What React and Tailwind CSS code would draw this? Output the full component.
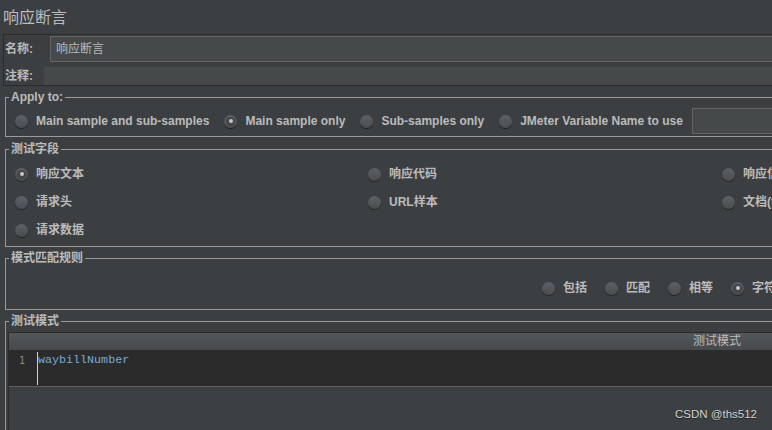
import React from "react";

function Radio({ checked }) {
  return (
    <span className="flex h-[13px] w-[13px] shrink-0 items-center justify-center rounded-full bg-linear-to-b from-[#5e6163] to-[#4a4d4f] shadow-[0_1px_1px_rgba(0,0,0,0.5)]">
      {checked && (
        <span className="flex h-[9px] w-[9px] items-center justify-center rounded-full bg-[#444749]">
          <span className="h-[4px] w-[4px] rounded-full bg-[#c6c6c6]" />
        </span>
      )}
    </span>
  );
}

function Option({ checked, children }) {
  return (
    <div className="flex items-center gap-[8px]">
      <Radio checked={checked} />
      <span className="whitespace-nowrap text-[12px] font-bold leading-[14px] text-[#bbbbbb]">{children}</span>
    </div>
  );
}

function Check({ children }) {
  return (
    <div className="flex items-center gap-[8px]">
      <span className="h-[13px] w-[13px] shrink-0 rounded-[2px] bg-linear-to-b from-[#5e6163] to-[#4a4d4f]" />
      <span className="whitespace-nowrap text-[12px] font-bold leading-[14px] text-[#bbbbbb]">{children}</span>
    </div>
  );
}

function Group({ title, className, children }) {
  return (
    <fieldset className={`ml-[5px] border border-[#9b9b9b] ${className}`}>
      <legend className="ml-[3px] px-[2px] text-[12px] font-bold leading-[15px] text-[#bbbbbb]">{title}</legend>
      {children}
    </fieldset>
  );
}

export default function App() {
  return (
    <div className="relative h-[430px] w-[772px] overflow-hidden bg-[#3c3f41] font-['Liberation_Sans','Noto_Sans_CJK_SC',sans-serif]">
      <div className="flex w-[1425px] flex-col">
        {/* title */}
        <div className="h-[34px] pl-[3px] pt-[10px] text-[16px] leading-[16px] text-[#bbbbbb]">响应断言</div>

        {/* name / comment panel */}
        <div className="ml-[3px] h-[52px] border border-[#2b2b2b] pt-[1px]">
          <div className="flex h-[26px] items-center">
            <span className="w-[46px] pl-[1px] text-[12px] font-bold text-[#bbbbbb]">名称:</span>
            <div className="flex h-[26px] flex-1 items-center border border-[#646464] bg-[#45494a] pl-[5px] text-[12px] text-[#bbbbbb]">
              响应断言
            </div>
          </div>
          <div className="mt-[5px] flex h-[18px] items-center">
            <span className="w-[40px] pl-[1px] text-[12px] font-bold text-[#bbbbbb]">注释:</span>
            <div className="h-[18px] flex-1 bg-[#45494a]" />
          </div>
        </div>

        {/* Apply to */}
        <Group title="Apply to:" className="mt-[4px]">
          <div className="flex h-[31px] items-center gap-[15px] pl-[9px] pt-[1px]">
            <Option>Main sample and sub-samples</Option>
            <Option checked>Main sample only</Option>
            <Option>Sub-samples only</Option>
            <Option>JMeter Variable Name to use</Option>
            <div className="ml-[-6px] h-[26px] w-[200px] border border-[#646464] bg-[#45494a]" />
          </div>
        </Group>

        {/* 测试字段 */}
        <Group title="测试字段" className="mt-[5px]">
          <div className="grid grid-cols-[353px_354px_354px_354px] pb-[2px] pl-[9px] pt-[3px]">
            <div className="flex h-[28px] items-center"><Option checked>响应文本</Option></div>
            <div className="flex h-[28px] items-center"><Option>响应代码</Option></div>
            <div className="flex h-[28px] items-center"><Option>响应信息</Option></div>
            <div className="flex h-[28px] items-center"><Option>响应头</Option></div>
            <div className="flex h-[28px] items-center"><Option>请求头</Option></div>
            <div className="flex h-[28px] items-center"><Option>URL样本</Option></div>
            <div className="flex h-[28px] items-center"><Option>文档(text)</Option></div>
            <div className="flex h-[28px] items-center"><Check>忽略状态</Check></div>
            <div className="flex h-[28px] items-center"><Option>请求数据</Option></div>
          </div>
        </Group>

        {/* 模式匹配规则 */}
        <Group title="模式匹配规则" className="mt-[4px]">
          <div className="flex h-[43px] items-start gap-[18px] pl-[536px] pt-[15px]">
            <Option>包括</Option>
            <Option>匹配</Option>
            <Option>相等</Option>
            <Option checked>字符串</Option>
            <Check>否</Check>
            <Check>或者</Check>
          </div>
        </Group>

        {/* 测试模式 */}
        <Group title="测试模式" className="mt-[4px]">
          <div className="ml-[2px] mt-[3px] border border-[#2b2b2b]">
            <div className="h-[17px] bg-linear-to-b from-[#54575a] to-[#474a4c] pl-[684px] text-[12px] leading-[17px] text-[#bbbbbb]">
              测试模式
            </div>
            <div className="flex h-[36px] bg-[#2b2b2b]">
              <div className="w-[28px] pl-[10px] pt-[4px] font-['DejaVu_Sans_Mono',monospace] text-[10px] leading-[14px] text-[#8a8a8a]">1</div>
              <div className="mt-[2px] h-[33px] border-l border-[#d0d0d0]">
                <div className="pt-[1px] font-['Liberation_Mono',monospace] text-[11.7px] leading-[14px] text-[#7aa8dc]">waybillNumber</div>
              </div>
            </div>
            <div className="h-[1px] bg-[#5e6060]" />
            <div className="h-[60px] bg-[#3d4042]" />
          </div>
        </Group>
      </div>

      <div className="absolute bottom-[9px] right-[15px] text-[11.5px] leading-[14px] text-[#d2d2d2] [text-shadow:0_1px_1px_rgba(0,0,0,0.5)]">
        CSDN @ths512
      </div>
    </div>
  );
}
